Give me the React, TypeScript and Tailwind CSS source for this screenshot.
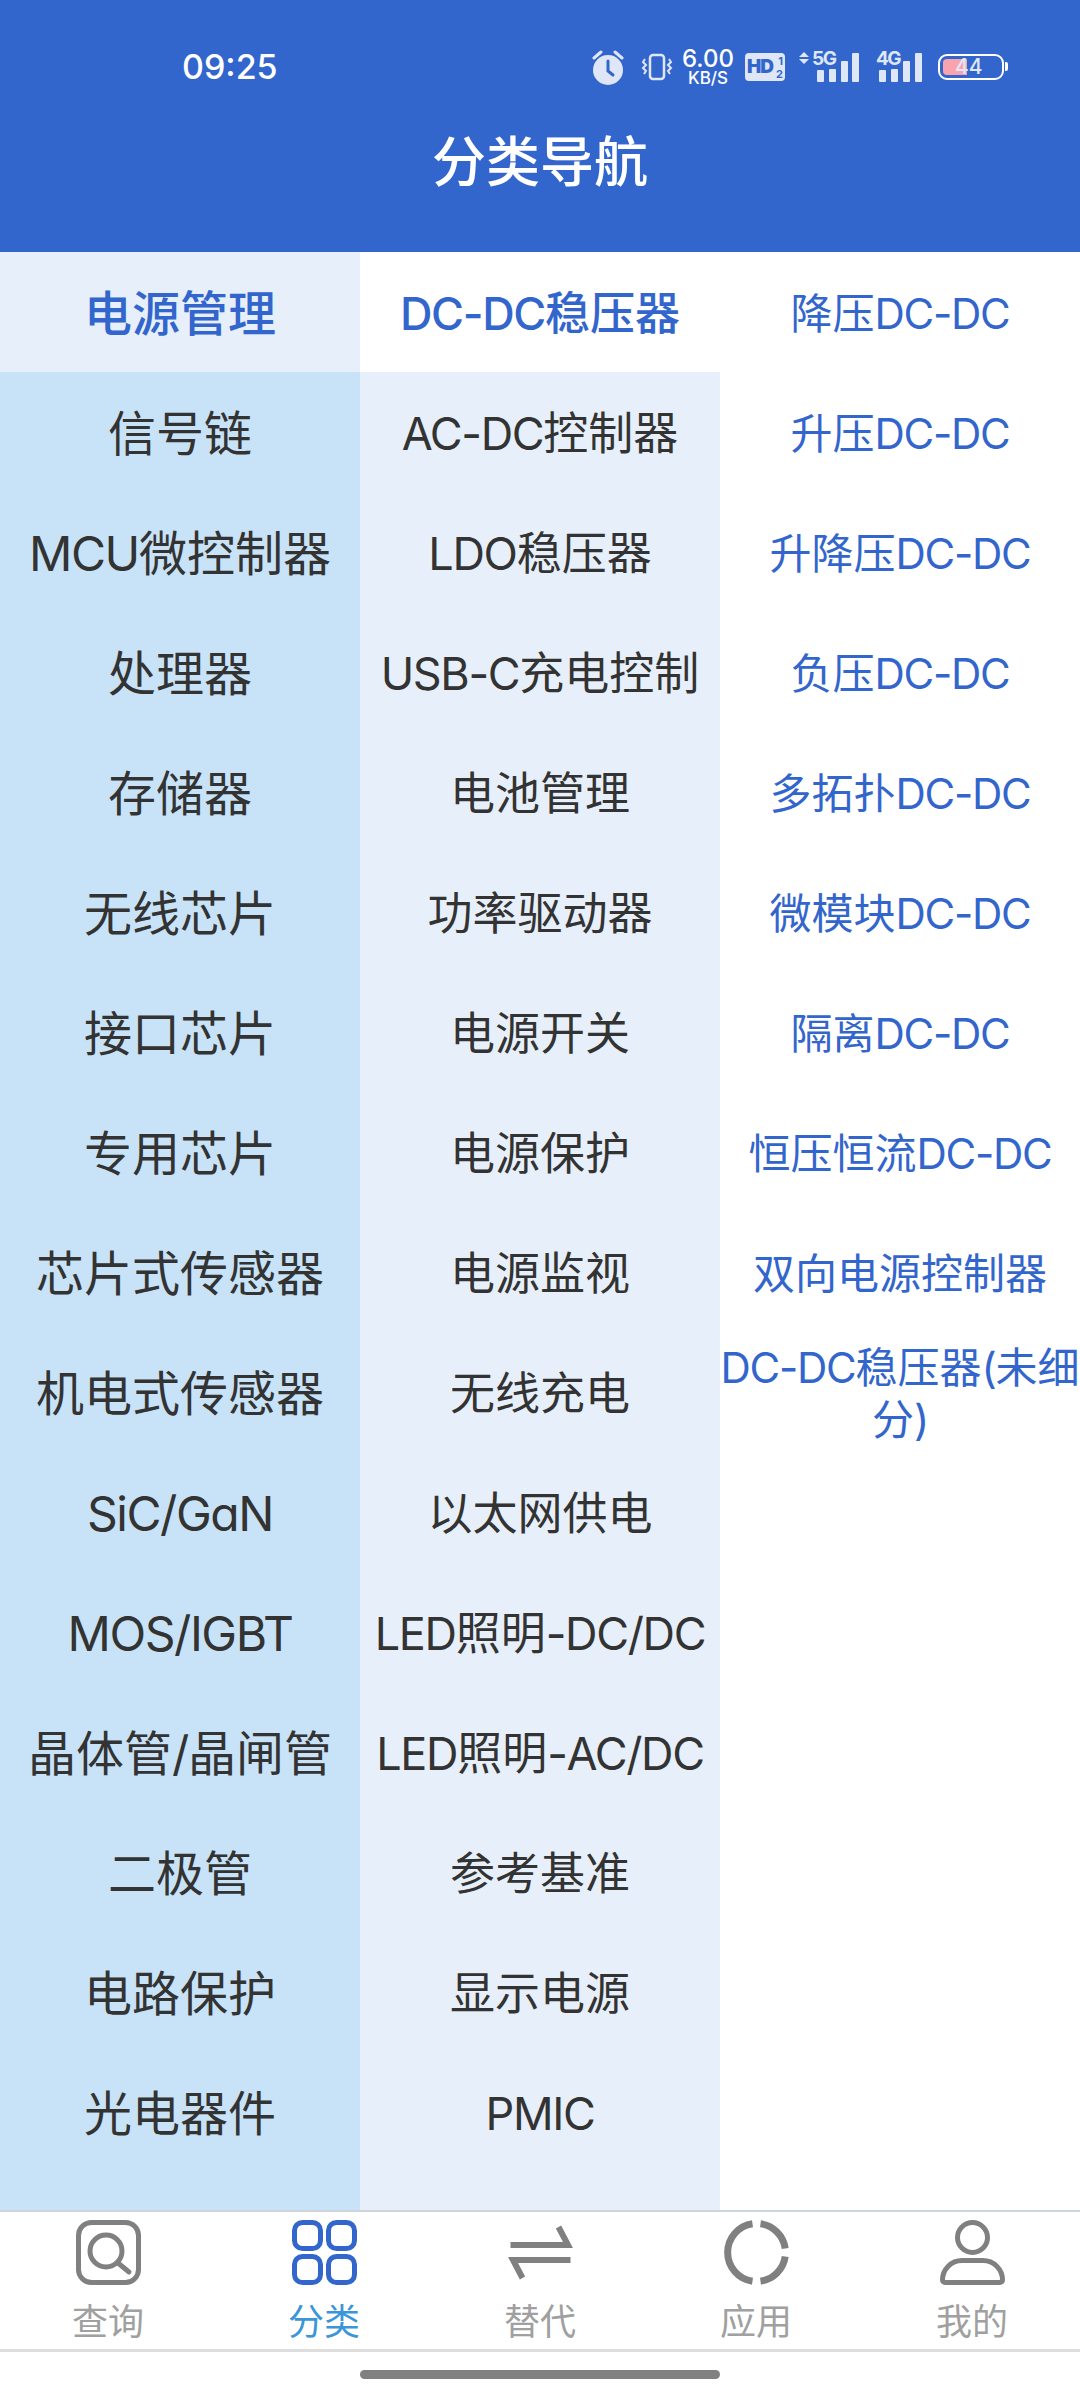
import React from "react";

const FONT = "font-['Inter','Noto_Sans_CJK_SC',sans-serif] [font-feature-settings:'cv11']";

const col1 = [
  "电源管理",
  "信号链",
  "MCU微控制器",
  "处理器",
  "存储器",
  "无线芯片",
  "接口芯片",
  "专用芯片",
  "芯片式传感器",
  "机电式传感器",
  "SiC/GaN",
  "MOS/IGBT",
  "晶体管/晶闸管",
  "二极管",
  "电路保护",
  "光电器件",
];

const col2 = [
  "DC-DC稳压器",
  "AC-DC控制器",
  "LDO稳压器",
  "USB-C充电控制",
  "电池管理",
  "功率驱动器",
  "电源开关",
  "电源保护",
  "电源监视",
  "无线充电",
  "以太网供电",
  "LED照明-DC/DC",
  "LED照明-AC/DC",
  "参考基准",
  "显示电源",
  "PMIC",
];

const col3 = [
  "降压DC-DC",
  "升压DC-DC",
  "升降压DC-DC",
  "负压DC-DC",
  "多拓扑DC-DC",
  "微模块DC-DC",
  "隔离DC-DC",
  "恒压恒流DC-DC",
  "双向电源控制器",
  "DC-DC稳压器(未细分)",
];

// latin runs sit a bit tighter than the chinese ones
const Label = ({ text }: { text: string }) => (
  <span>
    {text.split(/([A-Za-z0-9\-/()]+)/).map((part, i) =>
      i % 2 === 1 ? (
        <span key={i} className="tracking-[-0.03em]">
          {part}
        </span>
      ) : (
        part
      ),
    )}
  </span>
);

const StatusBar = () => (
  <div className="flex h-[104px] items-center pl-[182px] pt-[30px] text-white">
    <span className="w-[96px] text-[34px] leading-none font-medium">09:25</span>
    <div className="ml-[314px] flex items-center text-[#dfe7f7]">
      <svg width="32" height="36" viewBox="0 0 32 36" fill="none">
        <circle cx="16" cy="21" r="15" fill="currentColor" />
        <path d="M16 12v10l5 4" stroke="#3366cc" strokeWidth="3" strokeLinecap="round" />
        <path d="M2 9l7-6M30 9l-7-6" stroke="currentColor" strokeWidth="3" strokeLinecap="round" />
      </svg>
      <svg className="ml-[17px]" width="32" height="28" viewBox="0 0 32 28" fill="none" stroke="currentColor" strokeWidth="2.5">
        <rect x="9" y="2" width="14" height="24" rx="3" />
        <path d="M4 6l-2 3 3 3-3 3 3 3-2 3M28 6l2 3-3 3 3 3-3 3 2 3" strokeWidth="2" />
      </svg>
      <div className="ml-[10px] flex w-[50px] flex-col items-center text-white">
        <span className="text-[24px] leading-[20px] font-medium">6.00</span>
        <span className="mt-[1px] text-[17px] leading-[16px] font-medium">KB/S</span>
      </div>
      <div className="relative ml-[12px] h-[28px] w-[40px] rounded-[4px] bg-[#dfe7f7]">
        <span className="absolute top-[4px] left-[2px] text-[19px] leading-none font-black tracking-[-1px] text-[#3366cc]">HD</span>
        <span className="absolute top-[2px] right-[2px] text-[11px] leading-[12px] font-bold text-[#3366cc]">1</span>
        <span className="absolute right-[2px] bottom-[1px] text-[11px] leading-[12px] font-bold text-[#3366cc]">2</span>
      </div>
      <div className="relative ml-[14px] h-[32px] w-[60px]">
        <svg width="60" height="32" viewBox="0 0 60 32" fill="currentColor">
          <path d="M5 1l5 5H0zM5 13l5-5H0z" />
          <rect x="18" y="19" width="7" height="12" rx="1" />
          <rect x="30" y="18" width="7" height="13" rx="1" />
          <rect x="42" y="10" width="7" height="21" rx="1" />
          <rect x="53" y="2" width="7" height="29" rx="1" />
        </svg>
        <span className="absolute top-[-2px] left-[13px] text-[19px] leading-none font-bold tracking-[-1.5px]">5G</span>
      </div>
      <div className="relative ml-[17px] h-[32px] w-[46px]">
        <svg width="46" height="32" viewBox="0 0 46 32" fill="currentColor">
          <rect x="3" y="19" width="7" height="12" rx="1" />
          <rect x="15" y="18" width="7" height="13" rx="1" />
          <rect x="27" y="10" width="7" height="21" rx="1" />
          <rect x="39" y="2" width="7" height="29" rx="1" />
        </svg>
        <span className="absolute top-[-2px] left-0 text-[19px] leading-none font-bold tracking-[-1.5px]">4G</span>
      </div>
      <div className="relative ml-[16px] h-[26px] w-[66px] rounded-[9px] border-[2.5px] border-white">
        <div className="absolute top-[3px] bottom-[3px] left-[3px] w-[24px] rounded-l-[4px] bg-[#f9a3af]" />
        <span className="absolute top-[0px] left-[15px] text-[21px] leading-none font-medium text-[#dfe7f7]">44</span>
        <div className="absolute top-[6px] right-[-6px] h-[9px] w-[3px] rounded-r-[2px] bg-white" />
      </div>
    </div>
  </div>
);

const Tab = ({ label, active, children }: { label: string; active?: boolean; children: React.ReactNode }) => (
  <div className="flex flex-col items-center">
    {children}
    <span className={`mt-[18px] text-[36px] leading-[38px] ${active ? "text-[#3a96d8]" : "text-[#a0a0a0]"}`}>{label}</span>
  </div>
);

export default function App() {
  return (
    <div className={`flex h-[2400px] w-[1080px] flex-col overflow-hidden bg-white ${FONT}`}>
      <header className="h-[252px] bg-[#3366cc]">
        <StatusBar />
        <h1 className="mt-[29px] text-center text-[54px] leading-[60px] font-medium text-white">分类导航</h1>
      </header>

      <main className="grid h-[1958px] grid-cols-3">
        <div className="bg-[#c8e3f8] text-[48px] text-[#333333]">
          {col1.map((item, i) => (
            <div
              key={item}
              className={`flex h-[120px] items-center justify-center pt-[4px] text-center ${i === 0 ? "bg-[#e7f0fa] font-medium text-[#3366cc]" : ""}`}
            >
              <Label text={item} />
            </div>
          ))}
        </div>
        <div className="bg-[#e7f0fa] text-[45px] text-[#333333]">
          {col2.map((item, i) => (
            <div
              key={item}
              className={`flex h-[120px] items-center justify-center pt-[4px] text-center ${i === 0 ? "bg-white font-medium text-[#3366cc]" : ""}`}
            >
              <Label text={item} />
            </div>
          ))}
        </div>
        <div className="bg-white text-[42px] leading-[52px] text-[#3366cc]">
          {col3.map((item) => (
            <div key={item} className="flex h-[120px] items-center justify-center pt-[4px] text-center">
              <Label text={item} />
            </div>
          ))}
        </div>
      </main>

      <nav className="grid h-[142px] grid-cols-5 border-t-2 border-b-[3px] border-t-[#cfd3da] border-b-[#dddddd] pt-[8px]">
        <Tab label="查询">
          <svg width="65" height="65" viewBox="0 0 65 65" fill="none" stroke="#808080" strokeWidth="5">
            <rect x="2.5" y="2.5" width="60" height="60" rx="13" />
            <circle cx="30" cy="31" r="16" />
            <path d="M42 43l11 9" strokeLinecap="round" />
          </svg>
        </Tab>
        <Tab label="分类" active>
          <svg width="65" height="65" viewBox="0 0 65 65" fill="none" stroke="#3366cc" strokeWidth="5">
            <rect x="2.5" y="2.5" width="26" height="26" rx="8" />
            <rect x="36.5" y="2.5" width="26" height="26" rx="8" />
            <rect x="2.5" y="36.5" width="26" height="26" rx="8" />
            <rect x="36.5" y="36.5" width="26" height="26" rx="8" />
          </svg>
        </Tab>
        <Tab label="替代">
          <svg width="65" height="65" viewBox="0 0 65 65" fill="none" stroke="#808080" strokeWidth="6">
            <path d="M2.5 25H60L50.5 7M62.5 40H5L14.5 58" />
          </svg>
        </Tab>
        <Tab label="应用">
          <svg width="65" height="65" viewBox="0 0 65 65" fill="none" stroke="#808080" strokeWidth="7">
            <path d="M28.5 3.8A29 29 0 0 0 28.5 61.2M36.5 3.8A29 29 0 0 1 61.2 28.5M61.2 36.5A29 29 0 0 1 36.5 61.2" />
          </svg>
        </Tab>
        <Tab label="我的">
          <svg width="65" height="65" viewBox="0 0 65 65" fill="none" stroke="#808080" strokeWidth="5">
            <circle cx="32.5" cy="17.5" r="15" />
            <path d="M22 40.5h21a19.5 19.5 0 0 1 19.5 19.5v0a2.5 2.5 0 0 1-2.5 2.5H5a2.5 2.5 0 0 1-2.5-2.5v0A19.5 19.5 0 0 1 22 40.5z" />
          </svg>
        </Tab>
      </nav>

      <div className="flex flex-1 justify-center pt-[18px]">
        <div className="h-[9px] w-[360px] rounded-full bg-[#808080]" />
      </div>
    </div>
  );
}
